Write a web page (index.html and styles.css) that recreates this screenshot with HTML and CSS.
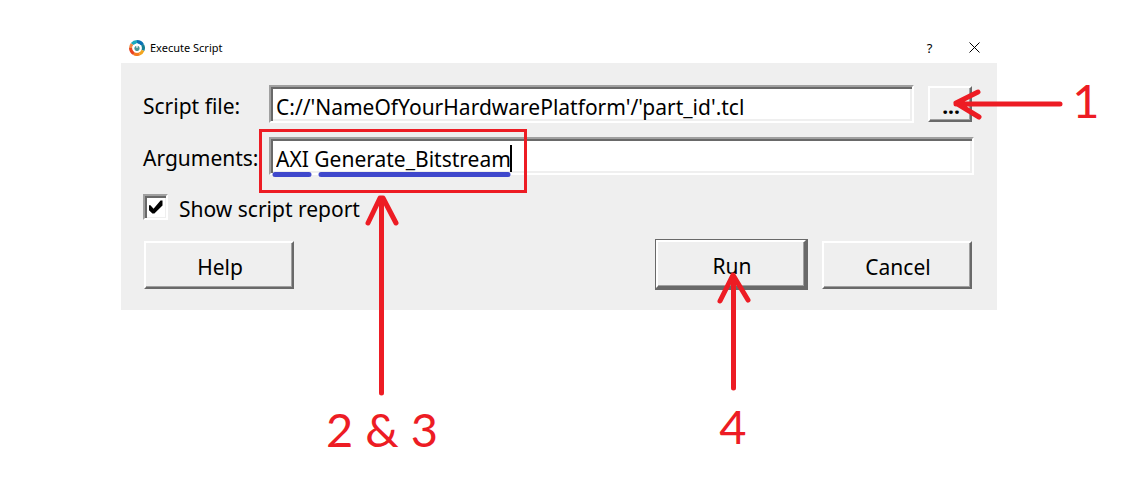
FILE: index.html
```html
<!DOCTYPE html>
<html lang="en">
<head>
<meta charset="utf-8">
<title>Execute Script</title>
<link rel="stylesheet" href="styles.css">
</head>
<body>
<main class="stage">
  <section class="dialog" aria-labelledby="dialog-title">
    <header class="titlebar">
      <svg class="logo" viewBox="0 0 16 16" aria-hidden="true">
        <g fill="none" stroke-width="3.4">
          <path d="M8 1.7A6.3 6.3 0 0 1 13.5 5" stroke="#0872b4"/>
          <path d="M13.5 5A6.3 6.3 0 0 1 13.8 10.4" stroke="#167f92"/>
          <path d="M13.8 10.4A6.3 6.3 0 0 1 10.5 13.8" stroke="#f2a51e"/>
          <path d="M10.5 13.8A6.3 6.3 0 0 1 5 13.5" stroke="#f47b20"/>
          <path d="M5 13.5A6.3 6.3 0 0 1 1.7 8" stroke="#e8431f"/>
          <path d="M1.7 8A6.3 6.3 0 0 1 3.2 4" stroke="#ee8a45"/>
          <path d="M3.2 4A6.3 6.3 0 0 1 8 1.7" stroke="#18aabd"/>
        </g>
        <circle cx="8" cy="8.4" r="2.6" fill="#4a9896"/>
        <path d="M8 3.2v4.6" stroke="#fff" stroke-width="1.4"/>
        <path d="M5.2 5.4a3.9 3.9 0 1 0 5.600 0" fill="none" stroke="#fff" stroke-width="1.7"/>
      </svg>
      <h1 class="title" id="dialog-title">Execute Script</h1>
      <button class="caption-button" type="button" aria-label="Context help">?</button>
      <button class="caption-button" type="button" aria-label="Close">
        <svg class="close-icon" viewBox="0 0 11 11" aria-hidden="true"><path d="M.5.5l10 10M10.5.5l-10 10" stroke="#000" fill="none"/></svg>
      </button>
    </header>
    <form class="form">
      <div class="field">
        <label class="label" for="script-file">Script file:</label>
        <input class="input" id="script-file" type="text" value="C://'NameOfYourHardwarePlatform'/'part_id'.tcl">
        <button class="button browse" type="button" aria-label="Browse">...</button>
      </div>
      <div class="field">
        <label class="label" for="arguments">Arguments:</label>
        <input class="input" id="arguments" type="text" value="AXI Generate_Bitstream">
      </div>
      <div class="option">
        <input class="checkbox" id="show-report" type="checkbox" checked>
        <label for="show-report">Show script report</label>
      </div>
      <div class="actions">
        <button class="button action" type="button">Help</button>
        <span class="default-frame"><button class="button action" type="button">Run</button></span>
        <button class="button action" type="button">Cancel</button>
      </div>
    </form>
  </section>
  <svg class="annotations" width="1133" height="485" viewBox="0 0 1133 485">
    <rect class="caret" x="510" y="145" width="2" height="27"/>
    <path class="underline" d="M275 174.500H309M321 174.500H508"/>
    <rect class="highlight" x="260.500" y="130.500" width="265" height="61"/>
    <path class="arrow" d="M1060 104H956M978 92L956 103L979 117"/>
    <path class="arrow" d="M381.500 393V199M368 223L380 198H383L396 223"/>
    <path class="arrow" d="M733.500 388V276M720 301L733 275L748 300"/>
    <text class="callout" x="1086" y="118">1</text>
    <text class="callout" x="382" y="447">2 &amp; 3</text>
    <text class="callout" x="733" y="444">4</text>
  </svg>
</main>
</body>
</html>
```
FILE: styles.css
```css
* {
  box-sizing: border-box;
}

body {
  margin: 0;
  background: #fff;
  color: #000;
  font-family: "Noto Sans", sans-serif;
  font-size: 21px;
  line-height: 30px;
}

button,
input {
  margin: 0;
  color: inherit;
  font: inherit;
}

.stage {
  position: relative;
  min-height: 100vh;
  padding: 32px 136px 0 121px;
}

.titlebar {
  display: flex;
  align-items: center;
  height: 31px;
  padding-left: 8px;
}

.logo {
  width: 16px;
  height: 16px;
  margin-right: 5px;
}

.title {
  flex: 1;
  margin: 0;
  font-size: 11px;
  font-weight: 400;
  line-height: 16px;
}

.caption-button {
  display: flex;
  align-items: center;
  justify-content: center;
  width: 45px;
  height: 31px;
  padding: 0;
  border: 0;
  background: none;
  font-size: 13px;
}

.close-icon {
  width: 11px;
  height: 11px;
}

.form {
  display: flex;
  flex-direction: column;
  gap: 14px;
  padding: 22px 23px 20px 22px;
  background: #efefef;
}

.field {
  display: flex;
  align-items: center;
}

.label {
  width: 126px;
  padding-top: 4px;
}

.input {
  flex: 1;
  min-width: 0;
  height: 38px;
  padding: 5px 4px 0 5px;
  border: 2px solid;
  border-color: #a0a0a0 #fff #fff #a0a0a0;
  border-radius: 0;
  outline: 0;
  background: #fff;
  box-shadow: inset 2px 2px #696969, inset -2px -2px #efefef;
}

.button {
  border: 2px solid;
  border-color: #fff #696969 #696969 #fff;
  border-radius: 0;
  background: #efefef;
  box-shadow: inset -1px -1px #a0a0a0;
}

.browse {
  width: 44px;
  height: 36px;
  margin: 0 2px 0 14px;
  padding: 3px 0 0 2px;
  font-weight: 700;
}

.option {
  display: flex;
  align-items: center;
  gap: 11px;
  height: 36px;
}

.checkbox {
  display: grid;
  place-items: center;
  width: 25px;
  height: 26px;
  border: 2px solid;
  border-color: #a0a0a0 #fff #fff #a0a0a0;
  appearance: none;
  background: #fff;
  box-shadow: inset 2px 2px #696969, inset -1px -1px #efefef;
}

.checkbox:checked::before {
  width: 14px;
  height: 15px;
  background: #000;
  clip-path: polygon(0 38%, 14% 38%, 36% 62%, 86% 6%, 100% 6%, 100% 40%, 42% 94%, 28% 94%, 0 68%);
  content: "";
}

.option label {
  padding-top: 4px;
}

.actions {
  display: flex;
  align-items: center;
  margin: 0 2px 0 1px;
}

.action {
  display: block;
  width: 150px;
  height: 48px;
  padding: 4px 0 0 2px;
}

.default-frame {
  margin: 0 14px 0 auto;
  border: 1px solid #696969;
  border-width: 1px 2px 2px 1px;
}

.annotations {
  position: absolute;
  top: 0;
  left: 0;
  pointer-events: none;
}

.underline {
  fill: none;
  stroke: #3f48cc;
  stroke-linecap: round;
  stroke-width: 5px;
}

.highlight {
  fill: none;
  stroke: #ed1c24;
  stroke-width: 3px;
}

.arrow {
  fill: none;
  stroke: #ed1c24;
  stroke-linecap: round;
  stroke-linejoin: round;
  stroke-width: 5px;
}

.callout {
  fill: #ed1c24;
  font-family: Lato, sans-serif;
  font-size: 47px;
  text-anchor: middle;
}
```
